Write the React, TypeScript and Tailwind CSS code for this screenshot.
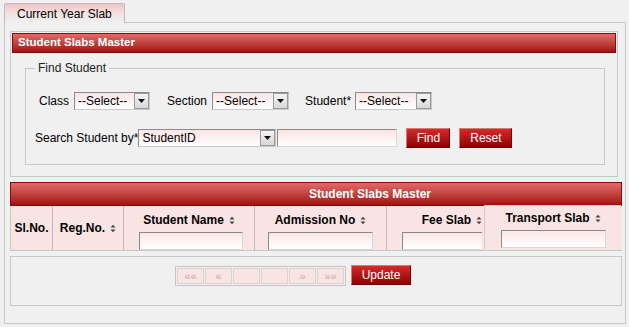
import React from 'react'

function SortIcon() {
  return (
    <svg width="6" height="9" viewBox="0 0 6 9" className="ml-[5px] inline-block">
      <path d="M0.5 3.5 L3 0.8 L5.5 3.5 Z" fill="#444" />
      <path d="M0.5 5.5 L3 8.2 L5.5 5.5 Z" fill="#444" />
    </svg>
  )
}

function Select({ width, label }: { width: string; label: string }) {
  return (
    <div className={`${width} h-[18px] flex border border-[#8a8a8a] border-r-[#c9c9c9] border-b-[#c9c9c9] bg-gradient-to-b from-[#fbe4e4] to-white`}>
      <div className="flex-1 pl-[3px] leading-[16px] text-[12px] text-black">{label}</div>
      <div className="w-[15px] h-full border border-[#9a9a9a] bg-gradient-to-b from-[#f4f4f4] to-[#d8d8d8] flex items-center justify-center">
        <svg width="7" height="4" viewBox="0 0 7 4">
          <path d="M0 0 L7 0 L3.5 4 Z" fill="#111" />
        </svg>
      </div>
    </div>
  )
}

function RedButton({ children, width }: { children: React.ReactNode; width: string }) {
  return (
    <div className={`${width} h-[20px] flex items-center justify-center border border-[#7a0000] border-t-[#d67a7a] border-l-[#d67a7a] bg-gradient-to-b from-[#d42a2a] to-[#8e0000] text-white text-[12px]`}>
      {children}
    </div>
  )
}

function FilterInput({ width }: { width: string }) {
  return (
    <div className={`${width} h-[18px] border border-[#8a8a8a] border-r-[#d8d8d8] border-b-[#d8d8d8] bg-gradient-to-b from-[#fbe6e6] to-white`} />
  )
}

export default function App() {
  return (
    <div className="w-[629px] h-[327px] bg-[#f0f0f0] pl-[4px] pt-[3px] font-['Liberation_Sans',Arial,sans-serif] text-[12px] text-black overflow-hidden">
      {/* tab */}
      <div className="relative z-10 -mb-px w-[121px] h-[20px] border border-b-0 border-[#bcbcbc] rounded-t-[2px] bg-gradient-to-b from-[#f2c4c4] via-[#f2e2e2] to-[#f0f0f0] flex items-center pl-[12px]">
        Current Year Slab
      </div>

      <div className="w-[622px] h-[302px] border border-[#c8c8c8] pl-[5px] pt-[8px]">
        {/* find section */}
        <div className="w-[608px] h-[146px] border border-[#c8c8c8] p-[1px]">
          <div className="h-[20px] border border-[#8c0a0a] bg-gradient-to-b from-[#e06a6a] to-[#a10e0e] text-white font-bold text-[11.5px] pl-[5px] flex items-center">
            Student Slabs Master
          </div>

          <fieldset className="mt-[8px] ml-[13px] w-[580px] h-[104px] border border-[#c8c8c8]">
            <legend className="ml-[9px] px-[3px] leading-[14px] text-[12px] text-[#222]">Find Student</legend>

            <div className="mt-[17px] pl-[13px] flex items-center h-[18px]">
              <span>Class</span>
              <div className="ml-[5px]"><Select width="w-[76px]" label="--Select--" /></div>
              <span className="ml-[17px]">Section</span>
              <div className="ml-[5px]"><Select width="w-[77px]" label="--Select--" /></div>
              <span className="ml-[16px]">Student*</span>
              <div className="ml-[4px]"><Select width="w-[77px]" label="--Select--" /></div>
            </div>

            <div className="mt-[18px] pl-[9px] flex items-center h-[20px]">
              <span>Search Student by*</span>
              <Select width="w-[138px]" label="StudentID" />
              <div className="ml-[1px] w-[120px] h-[18px] border border-[#8a8a8a] border-r-[#d8d8d8] border-b-[#d8d8d8] bg-gradient-to-b from-[#fbe4e4] to-white" />
              <div className="ml-[9px]"><RedButton width="w-[44px]">Find</RedButton></div>
              <div className="ml-[9px]"><RedButton width="w-[53px]">Reset</RedButton></div>
            </div>
          </fieldset>
        </div>

        {/* grid */}
        <div className="mt-[5px] w-[612px]">
          <div className="h-[24px] border border-[#8c0a0a] bg-gradient-to-b from-[#e06a6a] to-[#a10e0e] text-white font-bold text-[12px] pl-[298px] flex items-center">
            Student Slabs Master
          </div>
          <div className="h-[45px] flex border-l border-b border-[#c8c8c8] bg-[#f9e4e4] font-bold text-[12px]">
            <div className="w-[42px] border-r border-[#c8b4b4] flex items-center justify-center">Sl.No.</div>
            <div className="w-[71px] border-r border-[#c8b4b4] flex items-center justify-center">
              Reg.No.<SortIcon />
            </div>
            <div className="w-[131px] border-r border-[#c8b4b4] flex flex-col items-center pt-[5px]">
              <div className="flex items-center">Student Name<SortIcon /></div>
              <div className="mt-[3px] ml-[4px]"><FilterInput width="w-[104px]" /></div>
            </div>
            <div className="w-[132px] border-r border-[#c8b4b4] flex flex-col items-center pt-[5px]">
              <div className="flex items-center">Admission No<SortIcon /></div>
              <div className="mt-[3px]"><FilterInput width="w-[105px]" /></div>
            </div>
            <div className="w-[97px] flex flex-col items-end pt-[5px] pr-[2px] overflow-hidden">
              <div className="flex items-center">Fee Slab<SortIcon /></div>
              <div className="mt-[3px] w-[80px] overflow-hidden"><FilterInput width="w-[105px]" /></div>
            </div>
            <div className="relative -mt-[1px] w-[137px] h-[44px] border-l border-t border-[#d8c8c8] bg-[#f9e4e4] flex flex-col items-center pt-[3px]">
              <div className="flex items-center">Transport Slab<SortIcon /></div>
              <div className="mt-[3px]"><FilterInput width="w-[105px]" /></div>
            </div>
          </div>

          {/* pager */}
          <div className="mt-[5px] h-[50px] border border-[#c8c8c8] pl-[164px] pt-[8px] flex items-start">
            <div className="flex gap-[1px] border border-[#c4c4c4] p-[1px] mt-[1px]">
              {['««', '«', '', '', '»', '»»'].map((t, i) => (
                <div
                  key={i}
                  className="w-[27px] h-[16px] border border-[#dcd0d0] bg-[#f9e4e4] flex items-center justify-center text-[11px] text-[#c8a8a8]"
                >
                  {t}
                </div>
              ))}
            </div>
            <div className="ml-[5px]"><RedButton width="w-[60px]">Update</RedButton></div>
          </div>
        </div>
      </div>
    </div>
  )
}
